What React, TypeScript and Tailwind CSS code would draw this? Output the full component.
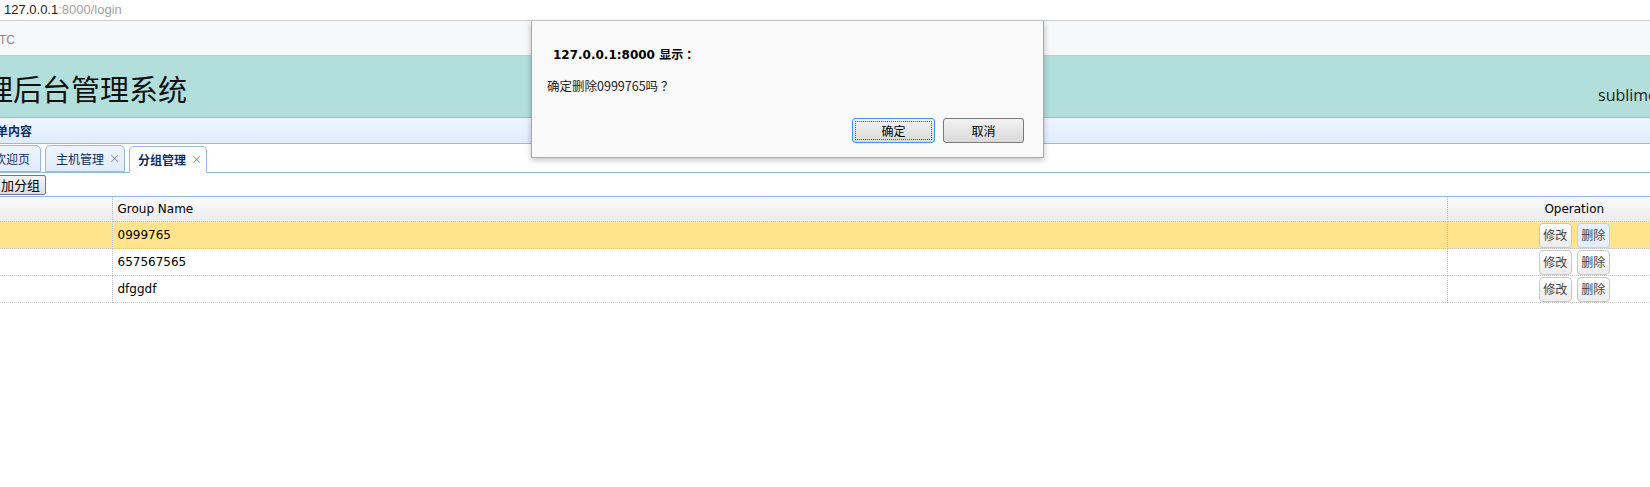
import React from 'react';

interface Group {
    id: number;
    name: string;
}

const groups: Group[] = [
    { id: 1, name: '0999765' },
    { id: 2, name: '657567565' },
    { id: 3, name: 'dfggdf' },
];

const cjk = "font-['Noto_Sans_CJK_SC',sans-serif]";
const grid = "font-['DejaVu_Sans','Noto_Sans_CJK_SC',sans-serif]";

function Tab({ label, active, closable, className }: { label: string; active?: boolean; closable?: boolean; className?: string }) {
    return (
        <div
            className={`h-[27px] flex items-center border border-[#95b8e7] rounded-t-[5px] text-[12px] text-[#0e2d5f] ${
                active ? 'bg-white font-bold -mb-px border-b-white' : 'bg-gradient-to-b from-[#eff5ff] to-[#e0ecff]'
            } ${className ?? ''}`}
        >
            <span>{label}</span>
            {closable && <span className="ml-[5px] text-[11px] font-normal text-[#7a8698]">×</span>}
        </div>
    );
}

function OpButton({ label, hover }: { label: string; hover?: boolean }) {
    return (
        <button
            className={`w-[33px] h-[25px] rounded-[4px] border text-[12px] text-[#444] ${cjk} ${
                hover ? 'border-[#b7d2ff] bg-[#e6efff]' : 'border-[#c8c8c8] bg-gradient-to-b from-white to-[#ececec]'
            }`}
        >
            {label}
        </button>
    );
}

export default function App() {
    return (
        <div className="relative w-[1650px] h-[487px] overflow-hidden bg-white">
            {/* address bar */}
            <div className="h-[21px] border-b border-[#c9cbcd] flex items-center pl-[4px] text-[13px] font-['Liberation_Sans',sans-serif]">
                <span className="text-[#222]">127.0.0.1</span>
                <span className="text-[#a3a3a3]">:8000/login</span>
            </div>

            <div className="w-[1701px]">
                {/* top strip */}
                <div className="h-[35px] bg-[#f7f8fa] border-b border-[#c8c8c8] flex items-center pt-[4px] text-[12px] text-[#8a8a8a] font-['Liberation_Sans',sans-serif]">
                    <span className="-ml-[1px]">TC</span>
                </div>

                {/* header */}
                <div className="h-[61px] bg-[#b2dfdb] flex">
                    <div className={`self-center mt-[3px] -ml-[16px] text-[29px] leading-none text-[#111] ${cjk}`}>理后台管理系统</div>
                    <div className="ml-auto w-[103px] self-end mb-[10px] text-[16px] text-[#222] font-['Open_Sans','Noto_Sans_CJK_SC',sans-serif] whitespace-nowrap">
                        sublime 退出
                    </div>
                </div>

                {/* panel title */}
                <div className="h-[27px] border-y border-[#95b8e7] bg-gradient-to-b from-[#eff5ff] to-[#e0ecff] flex items-center">
                    <span className={`-ml-[4px] text-[12px] font-bold text-[#0e2d5f] ${cjk}`}>单内容</span>
                </div>

                {/* tabs */}
                <div className={`h-[29px] border-b border-[#95b8e7] flex items-end gap-[4px] ${cjk}`}>
                    <Tab label="欢迎页" className="-ml-[17px] px-[10px]" />
                    <Tab label="主机管理" closable className="pl-[10px] pr-[4px]" />
                    <Tab label="分组管理" active closable className="pl-[8px] pr-[4px]" />
                </div>

                {/* toolbar */}
                <div className="h-[23px] flex items-center">
                    <button
                        className={`h-[20px] -ml-[4px] pl-[4px] pr-[5px] border border-[#767676] rounded-[2px] bg-gradient-to-b from-[#f6f6f6] to-[#dedede] text-[13px] leading-none text-black ${cjk}`}
                    >
                        加分组
                    </button>
                </div>

                {/* datagrid */}
                <table className={`w-[1701px] table-fixed border-collapse border-t border-[#95b8e7] text-[12px] text-black ${grid}`}>
                    <colgroup>
                        <col className="w-[112px]" />
                        <col className="w-[1335px]" />
                        <col className="w-[254px]" />
                    </colgroup>
                    <thead>
                        <tr className="h-[25px] bg-gradient-to-b from-[#f9f9f9] to-[#ececec]">
                            <th className="border-r border-b border-dotted border-[#c4c4c4]"></th>
                            <th className="border-r border-b border-dotted border-[#c4c4c4] px-[5px] text-left font-normal">Group Name</th>
                            <th className="border-b border-dotted border-[#c4c4c4] text-center font-normal">Operation</th>
                        </tr>
                    </thead>
                    <tbody>
                        {groups.map((g, i) => (
                            <tr key={g.id} className={`h-[27px] ${i === 0 ? 'bg-[#ffe48d]' : 'bg-white'}`}>
                                <td className="border-r border-b border-dotted border-[#c4c4c4]"></td>
                                <td className="border-r border-b border-dotted border-[#c4c4c4] px-[5px]">{g.name}</td>
                                <td className="border-b border-dotted border-[#c4c4c4]">
                                    <div className="flex justify-center gap-[5px]">
                                        <OpButton label="修改" />
                                        <OpButton label="删除" hover={i === 0} />
                                    </div>
                                </td>
                            </tr>
                        ))}
                    </tbody>
                </table>
            </div>

            {/* browser confirm dialog */}
            <div className="absolute left-[531px] top-[21px] w-[513px] h-[137px] bg-[#f9f9f9] border-x border-b border-[#a9a9a9] shadow-[0_2px_6px_rgba(0,0,0,0.25)] flex flex-col">
                <div className="pl-[21px] pt-[25px] text-[12px] font-bold text-black font-['DejaVu_Sans','Noto_Sans_CJK_SC',sans-serif]">
                    127.0.0.1:8000 显示<span className="ml-[3px]">：</span>
                </div>
                <div className={`pl-[15px] pt-[13px] text-[12.5px] text-[#222] ${cjk}`}>
                    确定删除0999765吗<span className="ml-[3px]">？</span>
                </div>
                <div className="mt-auto mb-[14px] flex justify-end gap-[8px] pr-[19px]">
                    <button className={`w-[83px] h-[25px] rounded-[3px] border border-[#3c9bd6] bg-gradient-to-b from-[#f2f2f2] to-[#d9d9d9] p-[2px] text-[12px] text-black ${cjk}`}>
                        <div className="w-full h-full border border-dotted border-[#555] flex items-center justify-center">确定</div>
                    </button>
                    <button className={`w-[81px] h-[25px] rounded-[3px] border border-[#7a7a7a] bg-gradient-to-b from-[#f2f2f2] to-[#d9d9d9] text-[12px] text-black ${cjk}`}>
                        取消
                    </button>
                </div>
            </div>
        </div>
    );
}
